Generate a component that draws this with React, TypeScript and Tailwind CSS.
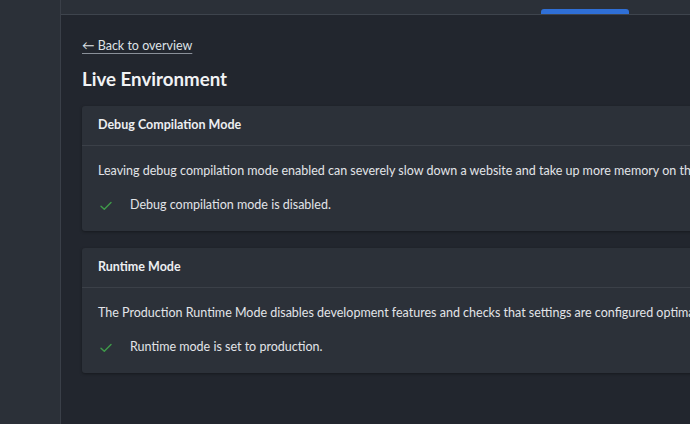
import React from 'react';

function CheckIcon() {
  return (
    <svg width="12" height="10" viewBox="0 0 12 10" fill="none" className="shrink-0">
      <path d="M1 5.2 L4.3 8.3 L11 1.5" stroke="#3f9a4a" strokeWidth="1.4" strokeLinecap="round" strokeLinejoin="round" />
    </svg>
  );
}

function CheckCard({
  title,
  description,
  result,
}: {
  title: string;
  description: string;
  result: string;
}) {
  return (
    <section className="w-[760px] rounded-[3px] bg-[#2c3139] shadow-[0_1px_3px_rgba(0,0,0,0.35)]">
      <div className="flex h-10 items-center border-b border-[#3b4048] px-4">
        <h2 className="text-[12.5px] font-bold text-[#eceef1]">{title}</h2>
      </div>
      <div className="px-4 pt-[15px] pb-4">
        <p className="text-[12.5px] leading-5 whitespace-nowrap text-[#e2e4e8]">{description}</p>
        <div className="mt-[14px] flex h-5 items-center pt-[1px]">
          <span className="flex w-8 items-center pl-[2px]">
            <CheckIcon />
          </span>
          <span className="text-[12.5px] text-[#e2e4e8]">{result}</span>
        </div>
      </div>
    </section>
  );
}

export default function App() {
  return (
    <div className="flex h-[424px] w-[690px] overflow-hidden bg-[#22262e] font-['Lato','Open_Sans',sans-serif]">
      <aside className="w-[61px] shrink-0 border-r border-[#3a3f48] bg-[#2b3038]" />
      <div className="flex min-w-0 flex-1 flex-col">
        <header className="relative h-[15px] shrink-0 border-b border-[#3e444d] bg-[#2b3038]">
          <div className="absolute bottom-0 left-[480px] h-[5px] w-[88px] rounded-t-[3px] bg-[#2f6fd6]" />
        </header>
        <main className="flex flex-col px-[21px] pt-[21px]">
          <a
            href="#"
            className="self-start text-[12.5px] leading-5 text-[#dfe2e6] underline decoration-[#8a9099] underline-offset-[3px]"
          >
            ← Back to overview
          </a>
          <h1 className="mt-[11px] text-[18.7px] leading-6 font-bold text-[#f1f2f4]">Live Environment</h1>
          <div className="mt-[15px] flex flex-col gap-[17px]">
            <CheckCard
              title="Debug Compilation Mode"
              description="Leaving debug compilation mode enabled can severely slow down a website and take up more memory on the server."
              result="Debug compilation mode is disabled."
            />
            <CheckCard
              title="Runtime Mode"
              description="The Production Runtime Mode disables development features and checks that settings are configured optimally for production."
              result="Runtime mode is set to production."
            />
          </div>
        </main>
      </div>
    </div>
  );
}
